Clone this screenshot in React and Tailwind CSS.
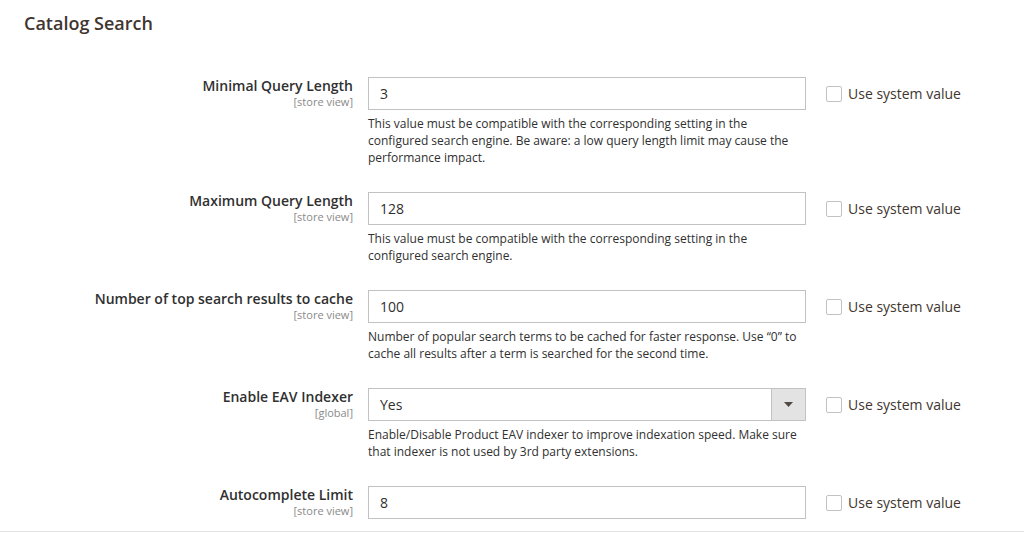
const rows = [
  {
    label: "Minimal Query Length",
    scope: "[store view]",
    value: "3",
    help: [
      "This value must be compatible with the corresponding setting in the",
      "configured search engine. Be aware: a low query length limit may cause the",
      "performance impact.",
    ],
  },
  {
    label: "Maximum Query Length",
    scope: "[store view]",
    value: "128",
    help: [
      "This value must be compatible with the corresponding setting in the",
      "configured search engine.",
    ],
  },
  {
    label: "Number of top search results to cache",
    scope: "[store view]",
    value: "100",
    help: [
      "Number of popular search terms to be cached for faster response. Use \u201c0\u201d to",
      "cache all results after a term is searched for the second time.",
    ],
  },
  {
    label: "Enable EAV Indexer",
    scope: "[global]",
    value: "Yes",
    select: true,
    help: [
      "Enable/Disable Product EAV indexer to improve indexation speed. Make sure",
      "that indexer is not used by 3rd party extensions.",
    ],
  },
  {
    label: "Autocomplete Limit",
    scope: "[store view]",
    value: "8",
    help: [],
  },
];

function Field({ row }) {
  return (
    <div className="flex items-start">
      <div className="w-[353px] shrink-0 text-right">
        <div className="text-[14px] leading-[18px] font-semibold text-[#303030]">{row.label}</div>
        <div className="text-[11px] leading-[13px] text-[#8a8a8a]">{row.scope}</div>
      </div>
      <div className="ml-[15px] w-[438px] shrink-0">
        <div className="flex h-[33px] border border-[#c2c2c2] bg-white">
          <div className="flex-1 flex items-center pl-[11px] text-[14px] text-[#303030]">{row.value}</div>
          {row.select && (
            <div className="w-[34px] flex items-center justify-center bg-[#e3e3e3] border-l border-[#c2c2c2]">
              <svg width="9" height="5" viewBox="0 0 9 5">
                <path d="M0 0h9L4.5 5z" fill="#514943" />
              </svg>
            </div>
          )}
        </div>
        {row.help.length > 0 && (
          <div className="mt-[5px] text-[12px] leading-[17px] text-[#303030]">
            {row.help.map((l, i) => (
              <div key={i} className="whitespace-nowrap">{l}</div>
            ))}
          </div>
        )}
      </div>
      <div className="ml-[20px] h-[33px] flex items-center">
        <span className="w-[16px] h-[16px] border border-[#c2c2c2] rounded-[2px] bg-white" />
        <span className="ml-[6px] text-[14px] text-[#41362f]">Use system value</span>
      </div>
    </div>
  );
}

export default function App() {
  return (
    <div
      className="w-[1024px] h-[533px] bg-white overflow-hidden"
      style={{ fontFamily: '"Open Sans", "Liberation Sans", sans-serif' }}
    >
      <div className="h-[532px] border-b border-[#e3e3e3]">
        <h2 className="pl-[24px] pt-[11px] text-[18px] leading-[24px] font-semibold text-[#41362f]">
          Catalog Search
        </h2>
        <div className="mt-[42px] flex flex-col gap-[26px]">
          {rows.map((r) => (
            <Field key={r.label} row={r} />
          ))}
        </div>
      </div>
    </div>
  );
}
